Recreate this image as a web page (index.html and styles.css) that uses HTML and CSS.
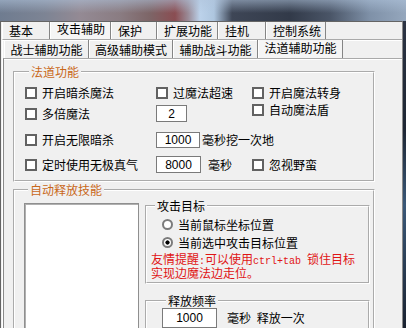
FILE: index.html
```html
<!DOCTYPE html>
<html lang="zh-CN">
<head>
<meta charset="utf-8">
<link rel="stylesheet" href="styles.css">
</head>
<body>
<div class="desk"></div>
<div class="win">
  <div class="main">
    <div class="tabs1">
      <div class="tab w48">基本</div>
      <div class="tab w61 sel">攻击辅助</div>
      <div class="tab w46">保护</div>
      <div class="tab w61">扩展功能</div>
      <div class="tab w48">挂机</div>
      <div class="tab w60">控制系统</div>
    </div>
    <div class="panel1">
      <div class="tabs2">
        <div class="tab2 w85">战士辅助功能</div>
        <div class="tab2 w84">高级辅助模式</div>
        <div class="tab2 w85">辅助战斗功能</div>
        <div class="tab2 w85 sel">法道辅助功能</div>
      </div>
      <div class="panel2">
        <fieldset class="grp g1">
          <legend class="orange">法道功能</legend>
          <div class="row r1">
            <label class="chk"><span class="cb"></span>开启暗杀魔法</label>
            <label class="chk"><span class="cb"></span>过魔法超速</label>
            <label class="chk"><span class="cb"></span>开启魔法转身</label>
          </div>
          <div class="row r2">
            <label class="chk"><span class="cb"></span>多倍魔法</label>
            <span class="num n2">2</span>
            <label class="chk up"><span class="cb"></span>自动魔法盾</label>
          </div>
          <div class="row r3">
            <label class="chk"><span class="cb"></span>开启无限暗杀</label>
            <div class="inl span2"><span class="num n1000">1000</span><span class="after a1">毫秒挖一次地</span></div>
          </div>
          <div class="row r4">
            <label class="chk"><span class="cb"></span>定时使用无极真气</label>
            <div class="inl"><span class="num n8000">8000</span><span class="after a2">毫秒</span></div>
            <label class="chk"><span class="cb"></span>忽视野蛮</label>
          </div>
        </fieldset>
        <fieldset class="grp g2">
          <legend class="orange">自动释放技能</legend>
          <div class="g2body">
            <div class="list"></div>
            <div class="rcol">
              <fieldset class="grp g3">
                <legend>攻击目标</legend>
                <label class="rad"><span class="rb"></span>当前鼠标坐标位置</label>
                <label class="rad rad2"><span class="rb on"></span>当前选中攻击目标位置</label>
                <p class="note">友情提醒<span class="mono">:</span>可以使用<span class="mono">ctrl+tab </span>锁住目标实现边魔法边走位。</p>
              </fieldset>
              <fieldset class="grp g4">
                <legend>释放频率</legend>
                <div class="inl"><span class="num nf">1000</span><span class="after a3">毫秒 释放一次</span></div>
              </fieldset>
            </div>
          </div>
        </fieldset>
      </div>
    </div>
  </div>
  <div class="edge"></div>
</div>
</body>
</html>
```

FILE: styles.css
```css
* { box-sizing: border-box; }
html, body { margin: 0; padding: 0; }
body {
  width: 406px; height: 328px; overflow: hidden;
  background: #1f2733;
  font-family: "Noto Sans CJK SC", "Liberation Sans", sans-serif;
  font-size: 12px; color: #000;
}
.desk {
  height: 21px;
  background:
    linear-gradient(to bottom, rgba(176,196,220,0.55) 0, rgba(176,196,220,0) 13px),
    linear-gradient(to right, #6f7c90 0, #7d8494 45px, #948a94 80px, #8a7c82 120px, #7d6567 150px, #8a4d52 175px, #9a8a96 188px, #bcd2ea 200px, #aec6df 214px, #3e4656 232px, #323a49 290px, #4a5567 330px, #7f91a8 370px, #95a7bd 406px);
}
.win { display: flex; height: 307px; }
.main {
  width: 403px; height: 100%;
  background: #f0f0f0;
  border: 1px solid #646464; border-bottom: 0; border-right-color: #8a8a8a;
  display: flex; flex-direction: column; overflow: hidden;
}
.edge { flex: 1; background: linear-gradient(to bottom, #2c3444 0, #1e2633 35%, #3a5878 60%, #1a2230 100%); }

.tabs1 { display: flex; flex: none; height: 17px; padding-left: 1px; }
.tab {
  height: 17px; line-height: 17px; padding-left: 6px;
  border-left: 1px solid #fff; border-right: 1px solid #858585;
  white-space: nowrap;
}
.tab.sel { line-height: 14px; background: #f5f5f5; }
.w46 { width: 46px; } .w48 { width: 48px; } .w60 { width: 60px; } .w61 { width: 61px; }
.w84 { width: 84px; } .w85 { width: 85px; }

.panel1 {
  flex: 1; min-height: 0; margin-left: 1px;
  border-top: 1px solid #a9a9a9; border-left: 1px solid #fff;
  box-shadow: inset 0 1px 0 #fff;
  display: flex; flex-direction: column;
}
.tabs2 { display: flex; flex: none; height: 18px; padding-left: 1px; }
.tab2 {
  height: 18px; line-height: 16px; padding-top: 2px; text-align: center;
  border-left: 1px solid #fff; border-right: 1px solid #858585;
  white-space: nowrap;
}
.tab2.sel { padding-top: 0; background: #f5f5f5; }
.panel2 {
  flex: 1; min-height: 0;
  border-top: 1px solid #a9a9a9; border-left: 1px solid #8a8a8a;
  box-shadow: inset 0 1px 0 #fff;
}

.grp { margin: 0; padding: 0; border: 2px groove #fff; min-width: 0; }
.grp > legend { padding: 0 2px; margin-left: 4px; height: 14px; line-height: 14px; }
.orange { color: #c9681a; }

.g1 { width: 362px; margin: 6px 0 0 9px; padding: 6px 0 8px 10px; }
.row { display: grid; grid-template-columns: 131px 96px auto; height: 16px; align-items: center; }
.r2 { margin-top: 4px; }
.r3 { margin-top: 11px; }
.r4 { margin-top: 8px; }
.chk { display: flex; align-items: center; line-height: 16px; white-space: nowrap; }
.cb { flex: none; width: 12px; height: 12px; border: 2px solid #626262; background: #fff; margin-right: 5px; }
.up { align-self: start; margin-top: -3px; }
.inl { display: flex; align-items: center; white-space: nowrap; }
.span2 { grid-column: 2 / 4; }
.num {
  flex: none; display: flex; align-items: center; justify-content: center;
  background: #fff; border: 1px solid #7a7a7a;
  font-family: "Liberation Sans", sans-serif; font-size: 12px;
}
.n2 { width: 31px; height: 17px; }
.n1000 { width: 44px; height: 16px; }
.n8000 { width: 45px; height: 17px; }
.nf { width: 55px; height: 20px; }
.after { line-height: 16px; }
.a1 { margin-left: 2px; }
.a2 { margin-left: 7px; }
.a3 { margin-left: 10px; word-spacing: 3px; }

.g2 { width: 362px; height: 160px; margin: 1px 0 0 9px; padding: 2px 0 0 9px; }
.g2body { display: flex; align-items: flex-start; gap: 6px; }
.list {
  flex: none; width: 115px; height: 130px; margin-top: 4px;
  background: #fff; border: 1px solid #8f8f8f; box-shadow: inset 1px 1px 0 #b0b0b0;
}
.rcol { display: flex; flex-direction: column; }
.g3 { width: 225px; padding: 3px 0 3px 4px; }
.rad { display: flex; align-items: center; height: 16px; margin-left: 11px; white-space: nowrap; }
.rad2 { margin-top: 2px; }
.rb { flex: none; width: 11px; height: 11px; border-radius: 50%; border: 2px solid #7b7b7b; background: #fff; margin-right: 5px; }
.rb.on { background: radial-gradient(circle, #000 0, #000 1.8px, #fff 2.4px); }
.note {
  margin: 4px 0 0; width: 208px; height: 25px; color: #e01515;
  font-family: "Liberation Sans", "Noto Sans CJK SC", sans-serif; line-height: 13px;
}
.mono { font-family: "Liberation Mono", monospace; font-size: 10px; }
.g4 { width: 225px; height: 60px; margin-top: 10px; padding: 0 0 0 15px; }
```
